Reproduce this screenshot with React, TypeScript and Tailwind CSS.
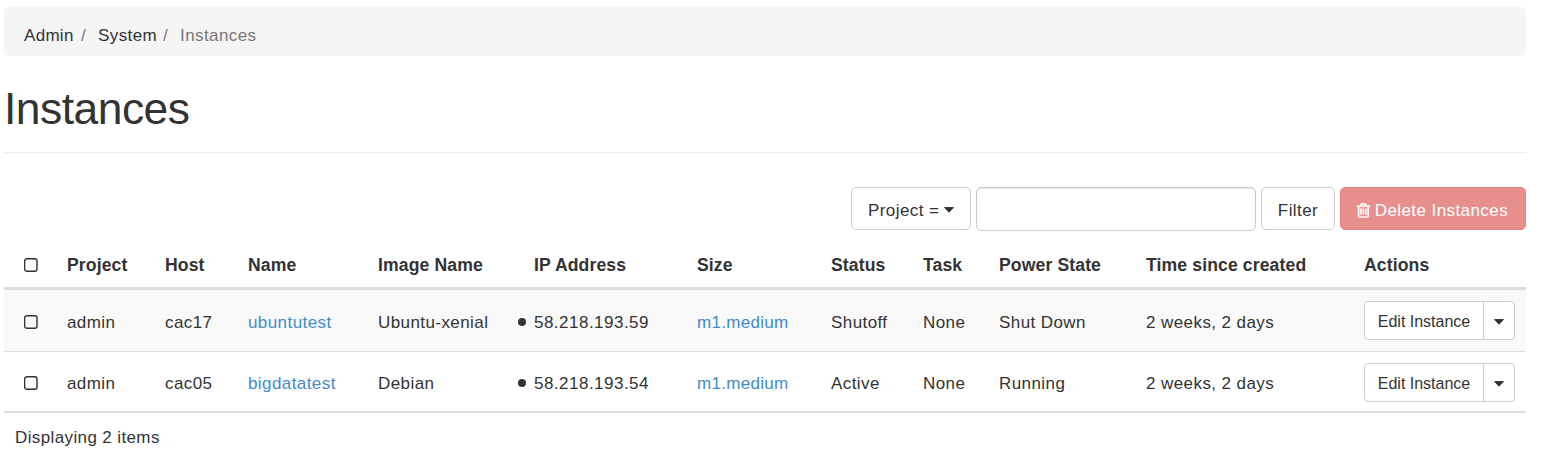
import React from "react";

type Row = { project: string; host: string; name: string; image: string; ip: string; size: string; status: string; task: string; power: string; time: string };

const rows: Row[] = [
  { project: "admin", host: "cac17", name: "ubuntutest", image: "Ubuntu-xenial", ip: "58.218.193.59", size: "m1.medium", status: "Shutoff", task: "None", power: "Shut Down", time: "2 weeks, 2 days" },
  { project: "admin", host: "cac05", name: "bigdatatest", image: "Debian", ip: "58.218.193.54", size: "m1.medium", status: "Active", task: "None", power: "Running", time: "2 weeks, 2 days" },
];

const headers = ["Project", "Host", "Name", "Image Name", "IP Address", "Size", "Status", "Task", "Power State", "Time since created", "Actions"];

const Checkbox = () => (
  <button role="checkbox" aria-checked="false" className="-mt-0.5 block size-3.5">
    <svg width="14" height="14" viewBox="0 0 14 14" fill="none" stroke="#333" strokeWidth="1.4">
      <rect x="0.6" y="0.8" width="12.4" height="12.4" rx="2.2" />
    </svg>
  </button>
);

const Caret = () => (
  <svg width="10" height="6" viewBox="0 0 10 6" className="block shrink-0 fill-[#333] stroke-[#333]" strokeWidth="1" strokeLinejoin="round">
    <path d="M0.6 0.6h8.8L5 5.2z" />
  </svg>
);

const Trash = () => (
  <svg width="16.8" height="16.8" viewBox="0 0 1792 1792" className="-mt-0.5 mr-[3px] -ml-[3px] shrink-0" fill="currentColor" stroke="currentColor" strokeWidth="50">
    <path d="M704 736v576q0 14-9 23t-23 9h-64q-14 0-23-9t-9-23v-576q0-14 9-23t23-9h64q14 0 23 9t9 23zm256 0v576q0 14-9 23t-23 9h-64q-14 0-23-9t-9-23v-576q0-14 9-23t23-9h64q14 0 23 9t9 23zm256 0v576q0 14-9 23t-23 9h-64q-14 0-23-9t-9-23v-576q0-14 9-23t23-9h64q14 0 23 9t9 23zm128 724v-948h-896v948q0 22 7 40.5t14.5 27 10.5 8.5h832q3 0 10.5-8.5t14.5-27 7-40.5zm-672-1076h448l-48-117q-7-9-17-11h-317q-10 2-17 11zm928 32v64q0 14-9 23t-23 9h-96v948q0 83-47 143.5t-113 60.5h-832q-66 0-113-58.5t-47-141.5v-952h-96q-14 0-23-9t-9-23v-64q0-14 9-23t23-9h309l70-167q15-37 54-63t79-26h320q40 0 79 26t54 63l70 167h309q14 0 23 9t9 23z" />
  </svg>
);

export default function App() {
  return (
    <div className="h-[467px] w-[1543px] overflow-hidden bg-white pt-[7px] pr-[17px] pl-1 font-['Liberation_Sans',Arial,sans-serif] text-[17px] leading-6 tracking-[0.42px] text-[#333]">
      <nav className="flex h-[49px] items-center rounded-[5px] bg-[#f5f5f5] pt-2 pr-5 pl-5">
        <a className="w-[57px] tracking-[0.3px]">Admin</a>
        <span className="w-[17px] text-[#777]">/</span>
        <a className="w-[65px]">System</a>
        <span className="w-[17px] text-[#777]">/</span>
        <span className="text-[#777]">Instances</span>
      </nav>
      <header className="h-[97px] border-b border-[#eee] pt-7">
        <h1 className="text-[44.4px] leading-[50px] tracking-[-0.5px]">Instances</h1>
      </header>
      <div className="flex h-[78px] items-start justify-end gap-[5px] pt-[34px]">
        <button className="flex h-[43px] w-[120px] items-center gap-[5px] rounded-[5px] border border-[#ccc] pt-[5px] pl-4">
          <span>Project =</span>
          <span className="-mt-[3px]"><Caret /></span>
        </button>
        <input className="h-11 w-[280px] rounded-[5px] border border-[#ccc] shadow-[inset_0_1px_2px_rgba(0,0,0,0.1)]" />
        <button className="h-[43px] w-[74px] rounded-[5px] border border-[#ccc] pt-[5px]">Filter</button>
        <button className="flex h-[43px] w-[186px] items-center justify-center rounded-[5px] border border-[#e48482] bg-[#e78f8d] pt-[5px] text-white">
          <Trash />
          <span className="whitespace-nowrap">Delete Instances</span>
        </button>
      </div>
      <table className="w-[1522px] table-fixed border-separate border-spacing-0 text-left">
        <colgroup>
          <col className="w-[53px]" />
          <col className="w-[98px]" />
          <col className="w-[83px]" />
          <col className="w-[130px]" />
          <col className="w-[156px]" />
          <col className="w-[163px]" />
          <col className="w-[134px]" />
          <col className="w-[92px]" />
          <col className="w-[76px]" />
          <col className="w-[147px]" />
          <col className="w-[218px]" />
          <col className="w-[172px]" />
        </colgroup>
        <thead>
          <tr className="h-[59px] *:border-b-[3px] *:border-[#ddd]">
            <th className="pt-3.5 pl-5"><Checkbox /></th>
            {headers.map((h) => (
              <th key={h} className="pt-3 pl-2.5 text-[17.6px] font-bold tracking-[0.12px] whitespace-nowrap">{h}</th>
            ))}
          </tr>
        </thead>
        <tbody>
          {rows.map((r, i) => (
            <tr key={r.name} className={i === 0 ? "h-[62px] bg-[#f9f9f9] *:border-b *:border-[#ddd]" : "h-[61px] *:border-b-2 *:border-[#ddd]"}>
              <td className="pt-1 pl-5"><Checkbox /></td>
              <td className="pt-1 pl-2.5">{r.project}</td>
              <td className="pt-1 pl-2.5">{r.host}</td>
              <td className="pt-1 pl-2.5 text-[#428bca]">{r.name}</td>
              <td className="pt-1 pl-2.5">{r.image}</td>
              <td className="pt-1">
                <span className="-ml-1.5 flex items-center gap-2 tracking-[0.48px]">
                  <i className="-mt-0.5 size-2 rounded-full bg-[#333]" />
                  {r.ip}
                </span>
              </td>
              <td className="pt-1 pl-2.5 tracking-[0.3px] text-[#428bca]">{r.size}</td>
              <td className="pt-1 pl-2.5">{r.status}</td>
              <td className="pt-1 pl-2.5">{r.task}</td>
              <td className="pt-1 pl-2.5">{r.power}</td>
              <td className="pt-1 pl-2.5">{r.time}</td>
              <td className={i === 0 ? "pl-2.5" : "pt-0.5 pl-2.5"}>
                <div className="flex h-[39px] w-[151px] rounded-[4px] border border-[#ccc] bg-white text-base tracking-normal">
                  <button className="w-[119px] border-r border-[#ccc] pt-0.5 whitespace-nowrap">Edit Instance</button>
                  <button className="flex flex-1 items-center justify-center pt-0.5"><Caret /></button>
                </div>
              </td>
            </tr>
          ))}
        </tbody>
      </table>
      <p className="pt-[13px] pl-[11px] tracking-[0.38px]">Displaying 2 items</p>
    </div>
  );
}
